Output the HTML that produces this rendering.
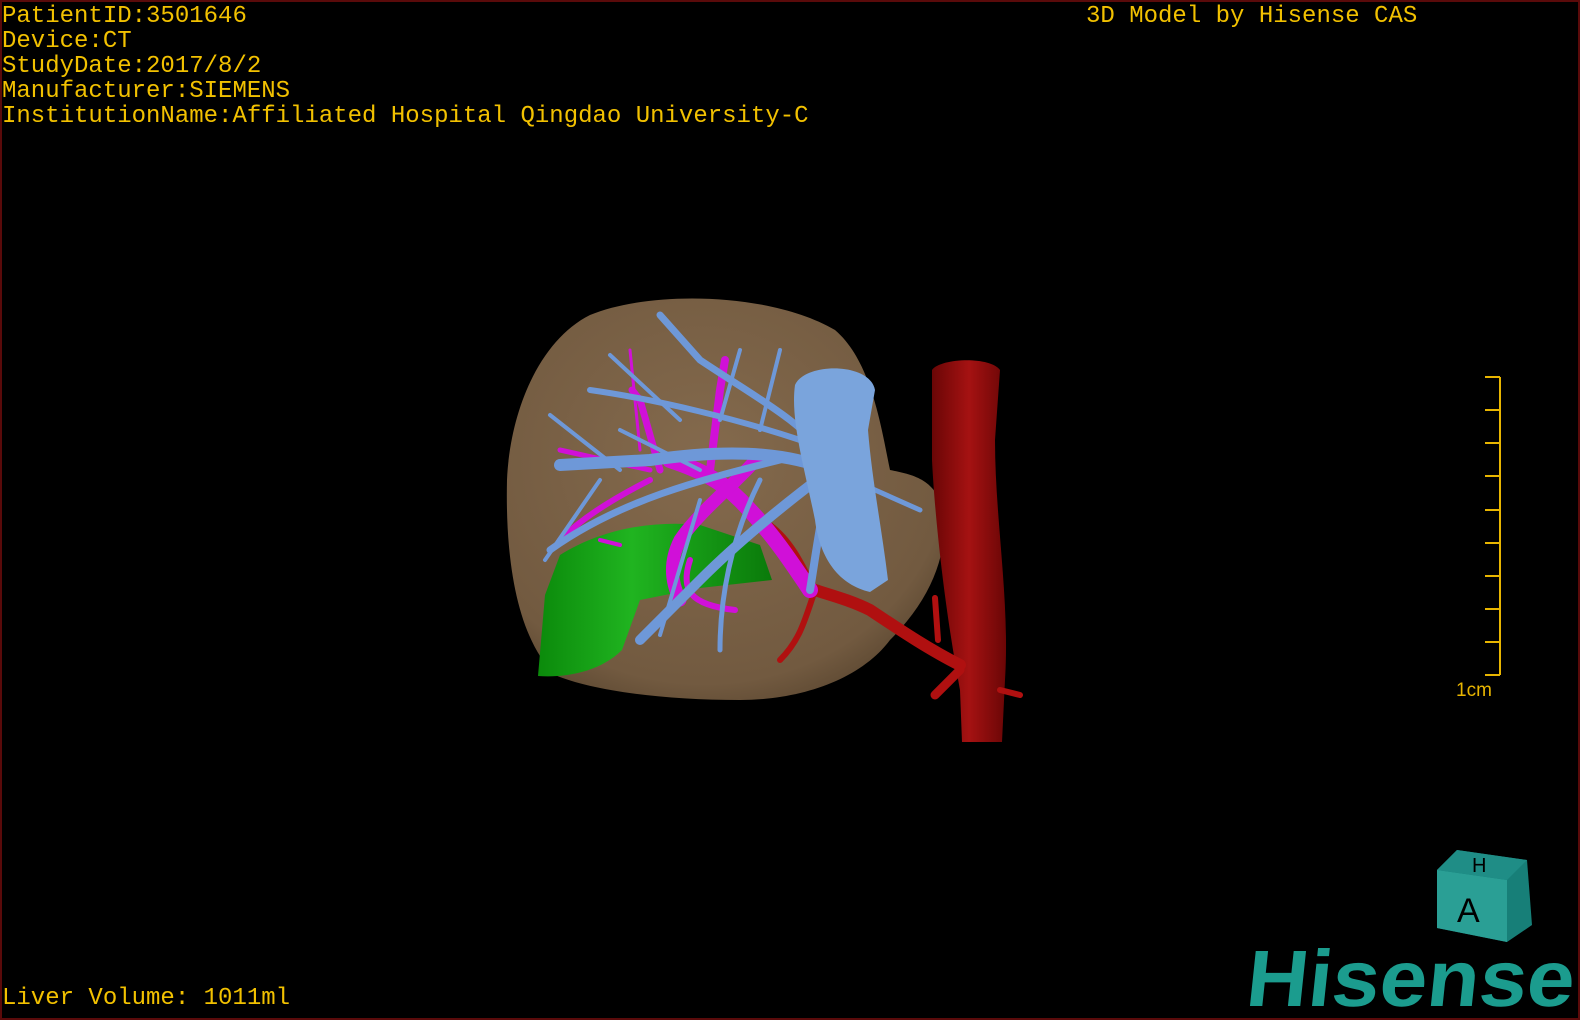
<!DOCTYPE html>
<html><head><meta charset="utf-8"><style>
html,body{margin:0;padding:0;background:#000;}
body{width:1580px;height:1020px;position:relative;overflow:hidden;}
.frame{position:absolute;left:0;top:0;width:1576px;height:1016px;border:2px solid #5a0a0a;}
.t{position:absolute;font-family:"Liberation Mono",monospace;font-size:24px;color:#f2c100;white-space:pre;line-height:25px;}
</style></head><body>
<svg width="1580" height="1020" style="position:absolute;left:0;top:0">
<defs>
<radialGradient id="lv" cx="0.45" cy="0.4" r="0.7">
<stop offset="0" stop-color="#846a4d"/><stop offset="0.8" stop-color="#725a40"/><stop offset="1" stop-color="#54412c"/></radialGradient>
<linearGradient id="ao" x1="0" x2="1"><stop offset="0" stop-color="#6a0606"/><stop offset="0.5" stop-color="#a51212"/><stop offset="1" stop-color="#6a0606"/></linearGradient>
<linearGradient id="gb" x1="0" x2="1"><stop offset="0" stop-color="#0b8a0b"/><stop offset="0.4" stop-color="#20b420"/><stop offset="1" stop-color="#0a7a0a"/></linearGradient>
</defs>
<path d="M590 315 C650 290,770 292,835 330 C870 360,880 420,890 470 C915 475,940 480,945 520 C945 560,930 600,890 640 C860 680,800 700,740 700 C660 700,590 690,555 675 C520 640,505 570,507 480 C510 410,540 340,590 315 Z" fill="url(#lv)"/>
<path d="M545 595 L560 555 C600 530,650 520,700 525 L760 545 L772 580 L700 588 L640 600 L622 650 C600 672,565 678,538 676 Z" fill="url(#gb)"/>
<path d="M932 370 C940 358,990 356,1000 370 L995 440 C995 520,1010 600,1005 680 L1002 742 L962 742 L960 690 C945 610,935 520,932 460 Z" fill="url(#ao)"/>
<g stroke="#b01010" fill="none" stroke-linecap="round">
<path d="M960 665 C930 650,900 630,870 610 C850 600,830 595,815 590" stroke-width="12"/>
<path d="M960 670 C950 680,940 690,935 695" stroke-width="9"/>
<path d="M815 590 C805 620,800 640,780 660" stroke-width="6"/>
<path d="M815 590 C800 560,790 540,770 525" stroke-width="6"/>
<path d="M935 598 L938 640" stroke-width="6"/>
<path d="M1000 690 L1020 695" stroke-width="6"/>
</g>
<g stroke="#d010d8" fill="none" stroke-linecap="round">
<path d="M810 590 C790 560,770 530,740 500 C720 480,700 470,670 460" stroke-width="16"/>
<path d="M760 455 C740 480,700 510,680 540 C670 560,670 580,680 600" stroke-width="13"/>
<path d="M710 470 L720 390 L725 360" stroke-width="8"/>
<path d="M660 470 L640 400 L632 390" stroke-width="7"/>
<path d="M650 480 C610 500,580 520,560 540" stroke-width="6"/>
<path d="M650 470 L560 450" stroke-width="5"/>
<path d="M690 560 C680 590,690 605,735 610" stroke-width="6"/>
<path d="M640 450 L630 350" stroke-width="3"/>
<path d="M600 540 L620 545" stroke-width="4"/>
</g>
<g stroke="#6e98d8" fill="none" stroke-linecap="round">
<path d="M830 470 C780 450,720 450,650 460 L560 465" stroke-width="12"/>
<path d="M830 470 C790 500,740 540,700 580 L640 640" stroke-width="10"/>
<path d="M830 480 C820 520,815 560,810 590" stroke-width="8"/>
<path d="M830 460 C800 420,760 400,700 360 L660 315" stroke-width="7"/>
<path d="M800 440 C740 420,660 400,590 390" stroke-width="6"/>
<path d="M780 460 C700 480,620 500,550 550" stroke-width="7"/>
<path d="M760 480 C730 540,720 600,720 650" stroke-width="5"/>
<path d="M830 470 L920 510" stroke-width="5"/>
<path d="M720 420 L740 350" stroke-width="4"/>
<path d="M680 420 L610 355" stroke-width="4"/>
<path d="M620 470 L550 415" stroke-width="4"/>
<path d="M700 500 L660 635" stroke-width="4"/>
<path d="M760 430 L780 350" stroke-width="4"/>
<path d="M600 480 L545 560" stroke-width="4"/>
<path d="M700 470 L620 430" stroke-width="4"/>
</g>
<path d="M795 385 C805 362,870 362,875 390 L868 430 C872 480,882 530,888 580 L870 592 C840 585,820 560,815 520 C805 470,790 420,795 385 Z" fill="#7aa4dc"/>
<g transform="translate(1437,850)">
<polygon points="20,0 90,10 95,75 70,92 0,78 0,20" fill="#177f78"/>
<polygon points="0,20 70,30 70,92 0,78" fill="#2a9f95"/>
<polygon points="20,0 90,10 70,30 0,20" fill="#1f8d86"/>
<text x="20" y="72" font-family="Liberation Sans,sans-serif" font-size="34" fill="#000">A</text>
<text x="35" y="22" font-family="Liberation Sans,sans-serif" font-size="20" fill="#000">H</text>
</g>
<line x1="1500" y1="377" x2="1500" y2="675" stroke="#e8b500" stroke-width="2"/>
<g stroke="#e8b500" stroke-width="2">
<line x1="1485" y1="377" x2="1500" y2="377"/><line x1="1485" y1="410" x2="1500" y2="410"/><line x1="1485" y1="443" x2="1500" y2="443"/><line x1="1485" y1="476" x2="1500" y2="476"/><line x1="1485" y1="510" x2="1500" y2="510"/><line x1="1485" y1="543" x2="1500" y2="543"/><line x1="1485" y1="576" x2="1500" y2="576"/><line x1="1485" y1="609" x2="1500" y2="609"/><line x1="1485" y1="642" x2="1500" y2="642"/><line x1="1485" y1="675" x2="1500" y2="675"/>
</g>
<text x="1456" y="696" font-family="Liberation Sans,sans-serif" font-size="19" fill="#e8b500">1cm</text>
<text x="1250" y="1006" font-family="Liberation Sans,sans-serif" font-weight="bold" font-size="80" fill="#1b9c8e" textLength="328" lengthAdjust="spacingAndGlyphs" transform="skewX(-6) translate(100,0)">Hisense</text>
</svg>
<div class="frame"></div>
<div class="t" style="left:2px;top:4px">PatientID:3501646
Device:CT
StudyDate:2017/8/2
Manufacturer:SIEMENS
InstitutionName:Affiliated Hospital Qingdao University-C</div>
<div class="t" style="left:1086px;top:4px">3D Model by Hisense CAS</div>
<div class="t" style="left:2px;top:986px">Liver Volume: 1011ml</div>
</body></html>
